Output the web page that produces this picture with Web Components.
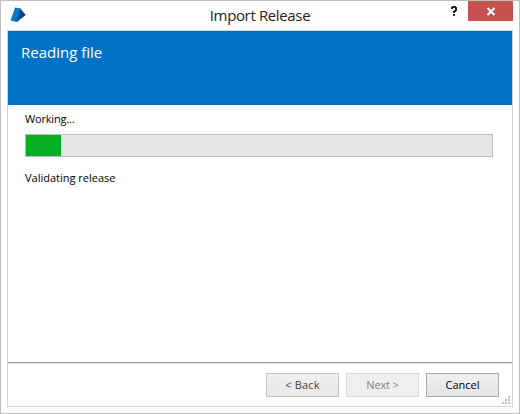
<!DOCTYPE html>
<html lang="en"><head><meta charset="utf-8"><title>Import Release</title>
<style>
html,body{margin:0;width:520px;height:414px;overflow:hidden;background:#fff}
body{font-family:"Open Sans","Noto Sans",sans-serif;font-size:11px;color:#000}
</style></head><body>
<dialog-window>
  <title-bar slot="title">Import Release</title-bar>
  <page-banner>Reading file</page-banner>
  <task-progress value="35"><span slot="status" style="letter-spacing:-.17px">Working...</span><span slot="detail">Validating release</span></task-progress>
  <wizard-footer>
    <push-button class="back" style="--space:.15px">&lt; Back</push-button>
    <push-button class="next" style="--space:-.15px" dim>Next &gt;</push-button>
    <push-button class="cancel" strong>Cancel</push-button>
  </wizard-footer>
</dialog-window>
<script>
const define=(name,html,setup)=>customElements.define(name,class extends HTMLElement{
  constructor(){super();this.attachShadow({mode:'open'}).innerHTML=html}
  connectedCallback(){if(setup)setup(this)}
});
define('dialog-window',`<style>
:host{display:flex;flex-direction:column;box-sizing:border-box;width:520px;height:414px;border:1px solid #bebebe;background:#fff}
.client{flex:1;display:flex;flex-direction:column;box-sizing:border-box;margin:0 6px 6px;border:1px solid #d5d5d5}
</style><slot name="title"></slot><div class="client"><slot></slot></div>`);
define('title-bar',`<style>
:host{display:grid;grid-template-columns:73px 1fr 73px;height:29px;padding:0 6px 0 0;font-size:15px;line-height:29px;color:#222}
.logo{display:block;margin:5px 0 0 8px}
.text{text-align:center;letter-spacing:-.36px;padding-left:6px}
.tools{display:flex}
.help{width:28px;flex:none;display:block}
.close{width:45px;height:20px;flex:none;background:#c75050}
svg{display:block}
</style><svg class="logo" width="18" height="18" viewBox="0 0 18 18"><path d="M6 1.5L12 2.5L8 16L1.5 14.5Z" fill="#0879c4"/><path d="M11 2.3L16.5 9L8 16L7 15.5Z" fill="#07539b"/><path d="M11.5 3L16.5 9L11 13Z" fill="#07458b"/><path d="M1.5 14L6 15L9 15L7.5 16Z" fill="#35a0df"/></svg>
<div class="text"><slot></slot></div><div class="tools"><svg class="help" width="28" height="20" viewBox="0 0 28 20" fill="#222" shape-rendering="crispEdges"><path d="M12 5h4v1h1v4h-1v1h-1v1h-2v-2h1v-1h1V7h-2v1h-2V6h1zM13 13h2v2h-2z"/></svg><svg class="close" viewBox="0 0 45 20"><path d="M19.5 7L26.5 14M26.5 7L19.5 14" stroke="#fff" stroke-width="1.9"/></svg></div>`);
define('page-banner',`<style>:host{display:block;box-sizing:border-box;height:74px;background:#0072c6;color:#fff;padding:11px 13px;font-size:15px;line-height:20px}</style><slot></slot>`);
define('task-progress',`<style>
:host{display:flex;flex-direction:column;flex:1;padding:6px 18px 0 17px;line-height:16px}
.track{box-sizing:border-box;height:23px;margin:7px 1px 13px 0;border:1px solid #bcbcbc;background:#e6e6e6}
.fill{height:100%;background:#06b025}
</style><slot name="status"></slot><div class="track"><div class="fill"></div></div><slot name="detail"></slot>`,e=>e.shadowRoot.querySelector('.fill').style.width=e.getAttribute('value')+'px');
define('wizard-footer',`<style>
:host{display:flex;flex:none;justify-content:flex-end;gap:7px;box-sizing:border-box;height:44px;border-top:1px solid #a0a0a0;padding:10px 13px 0 0;box-shadow:inset 0 1px #dedede;position:relative}
svg{position:absolute;right:2px;bottom:2px}
</style><slot></slot><svg width="8" height="8" viewBox="0 0 8 8" fill="#bfbfbf"><path d="M6 0h2v2H6zM3 3h2v2H3zM6 3h2v2H6zM0 6h2v2H0zM3 6h2v2H3zM6 6h2v2H6z"/></svg>`);
define('push-button',`<style>
:host{display:block;box-sizing:border-box;width:73px;height:24px;border:1px solid #c3c3c3;background:linear-gradient(#f0f0f0,#e8e8e8);text-align:center;line-height:22px;letter-spacing:var(--space,0);color:#444}
:host([dim]){border-color:#d9d9d9;background:#efefef;color:#838383}
:host([strong]){border-color:#acacac;background:linear-gradient(#f0f0f0,#e5e5e5);color:#000}
</style><slot></slot>`);
</script></body></html>
